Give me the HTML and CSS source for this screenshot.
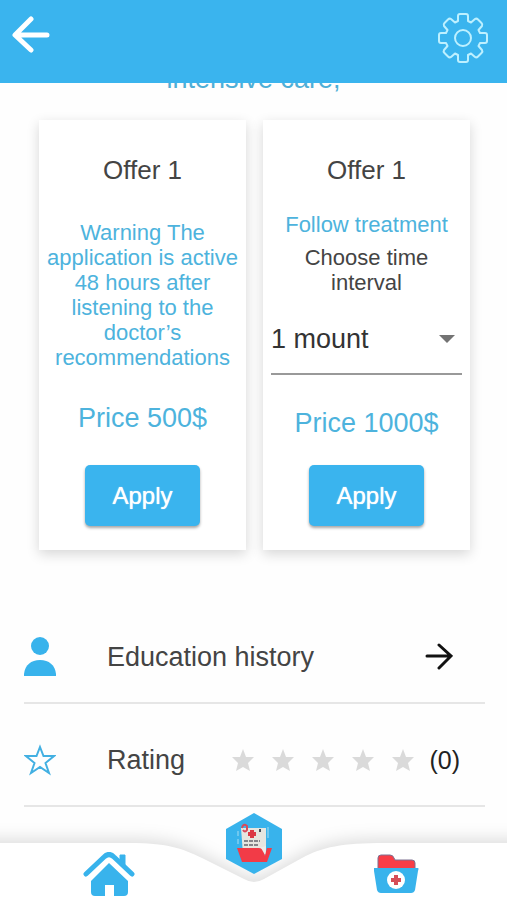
FILE: index.html
```html
<!DOCTYPE html>
<html lang="en">
<head>
<meta charset="utf-8">
<meta name="viewport" content="width=device-width, initial-scale=1">
<title>Offers</title>
<link rel="stylesheet" href="styles.css">
</head>
<body>
<header class="topbar">
  <a class="back" href="#" aria-label="Back">
    <svg width="38" height="38" viewBox="0 0 38 38" fill="none" stroke="#fff" stroke-width="5" stroke-linecap="round" stroke-linejoin="round"><path d="M19 3 3 19l16 15M4 19h31"/></svg>
  </a>
  <button class="settings" type="button" aria-label="Settings">
    <svg width="52" height="52" viewBox="-26 -26 52 52" fill="none" stroke="#bdf0ff" stroke-width="2" stroke-linejoin="round"><path d="M-5-17V-22Q-5-24-3-24H3Q5-24 5-22V-17Q7-16 8-15.500L12-19Q13.500-20 15-18.500L18.500-15Q20-13.500 19-12L15.500-8Q16-7 17-5H22Q24-5 24-3V3Q24 5 22 5H17Q16 7 15.500 8L19 12Q20 13.500 18.500 15L15 18.500Q13.500 20 12 19L8 15.500Q7 16 5 17V22Q5 24 3 24H-3Q-5 24-5 22V17Q-7 16-8 15.500L-12 19Q-13.500 20-15 18.500L-18.500 15Q-20 13.500-19 12L-15.500 8Q-16 7-17 5H-22Q-24 5-24 3V-3Q-24-5-22-5H-17Q-16-7-15.500-8L-19-12Q-20-13.500-18.500-15L-15-18.500Q-13.500-20-12-19L-8-15.500Q-7-16-5-17Z"/><circle r="8"/></svg>
  </button>
</header>

<main>
  <p class="specialty">intensive care,</p>

  <section class="offers">
    <article class="card">
      <h2>Offer 1</h2>
      <p class="warning">Warning The application is active 48 hours after listening to the doctor’s recommendations</p>
      <p class="price">Price 500$</p>
      <button class="apply" type="button">Apply</button>
    </article>
    <article class="card">
      <h2>Offer 1</h2>
      <p class="follow">Follow treatment</p>
      <label class="choose" for="interval">Choose time interval</label>
      <div class="picker">
        <select id="interval"><option>1 mount</option></select>
        <svg width="16" height="8" viewBox="0 0 16 8" aria-hidden="true"><path d="M0 0h16L8 8Z" fill="#737373"/></svg>
      </div>
      <p class="price">Price 1000$</p>
      <button class="apply" type="button">Apply</button>
    </article>
  </section>

  <section class="rows">
    <a class="row" href="#">
      <svg width="32" height="40" viewBox="0 0 32 40" fill="#38b3ec"><circle cx="16" cy="9" r="9"/><path d="M0 39V37C1 28 7 23 16 23S31 28 32 37V39Z"/></svg>
      <span class="name">Education history</span>
      <svg class="go" width="28" height="28" viewBox="0 0 28 28" fill="none" stroke="#111" stroke-width="3" stroke-linecap="round"><path d="M2 13h23M14 2l12 11-12 12"/></svg>
    </a>
    <div class="row">
      <svg width="32" height="32" viewBox="0 0 32 32" fill="none" stroke="#43b0e2" stroke-width="2"><path d="m16 3 3.500 9H30l-8.500 7 3.500 10-9-6-9 6 3.500-10L2 12h10.500Z"/></svg>
      <span class="name">Rating</span>
      <span class="stars" role="img" aria-label="0 of 5 stars">
        <svg viewBox="0 0 24 24"><path d="m12 1 3 8h8l-6 6 2 8-7-4-7 4 2-8-6-6h8Z"/></svg>
        <svg viewBox="0 0 24 24"><path d="m12 1 3 8h8l-6 6 2 8-7-4-7 4 2-8-6-6h8Z"/></svg>
        <svg viewBox="0 0 24 24"><path d="m12 1 3 8h8l-6 6 2 8-7-4-7 4 2-8-6-6h8Z"/></svg>
        <svg viewBox="0 0 24 24"><path d="m12 1 3 8h8l-6 6 2 8-7-4-7 4 2-8-6-6h8Z"/></svg>
        <svg viewBox="0 0 24 24"><path d="m12 1 3 8h8l-6 6 2 8-7-4-7 4 2-8-6-6h8Z"/></svg>
      </span>
      <span class="count">(0)</span>
    </div>
  </section>
</main>

<nav class="tabs" aria-label="Main">
  <svg class="wave" viewBox="0 0 507 100" preserveAspectRatio="none" aria-hidden="true"><path d="M-20 43H130C165 43 182 48 202 58L244 79Q254 85 264 79L302 58C322 47 342 43 385 43H527V120H-20Z" fill="#fff"/></svg>
  <a href="#" aria-label="Home">
    <svg width="52" height="46" viewBox="0 0 52 46"><path d="M37 12V3h5v14" fill="#38b3ec" stroke="#38b3ec" stroke-linejoin="round"/><path d="M3 22 21 5Q26 0 31 5L49 22" fill="none" stroke="#38b3ec" stroke-width="5" stroke-linecap="round"/><path d="M26 11 45 29V40Q45 44 41 44H31V33H22V44H12Q8 44 8 40V29Z" fill="#38b3ec"/></svg>
  </a>
  <a class="center" href="#" aria-label="Records">
    <svg width="58" height="62" viewBox="0 0 58 62"><path d="M30 0 58 16V46L30 61 2 46V16Z" fill="#38b3ec"/><path d="M17 15H42V41H19Z" fill="#e6e6e0"/><path d="M14 18v5m0 3v5M44 14v11" stroke="#a5dcf2" fill="none"/><path d="M18 15q1-5 5-2v4q-2 3-4 0" fill="none" stroke="#d84b5c" stroke-width="2"/><path d="M28 17v8m-4-4h8" stroke="#dc3945" stroke-width="4"/><path d="M36 16v3" stroke="#45505b" stroke-width="2"/><path d="M20 28h16M20 32h14" stroke="#85858a" stroke-width="2" stroke-dasharray="4 1"/><path d="M13 35H37L41 42 43 35H48L43 49H18Z" fill="#f23b47"/><path d="M35 35Q40 35 41 43L42 33Z" fill="#eeeeea"/></svg>
  </a>
  <a class="folder" href="#" aria-label="Medical folder">
    <svg width="46" height="40" viewBox="0 0 46 40"><path d="M5 17V4Q5 1 8 1H17Q20 1 21 4L22 6H39Q42 6 42 9V17Z" fill="#f83d46" stroke="#7d7191"/><path d="M1 14H45Q46 14 45 17L42 36Q41 39 38 39H8Q5 39 4 36L1 17Z" fill="#38b3ec"/><circle cx="23" cy="26" r="9" fill="#fff"/><path d="M23 21v10m-5-5h10" stroke="#d64e58" stroke-width="4"/></svg>
  </a>
</nav>
</body>
</html>
```
FILE: styles.css
```css
* {
  box-sizing: border-box;
}

body {
  margin: 0;
  padding-bottom: 92px;
  background: #fefefe;
  color: #444;
  font: 27px/32px "Liberation Sans", Arial, sans-serif;
}

h2,
p {
  margin: 0;
  font-size: 27px;
  font-weight: 400;
}

h2 {
  font-size: 26px;
}

a {
  color: inherit;
  text-decoration: none;
}

svg {
  display: block;
  flex: none;
}

button {
  border: 0;
  font-family: inherit;
  cursor: pointer;
}

.topbar {
  position: sticky;
  top: 0;
  z-index: 2;
  display: flex;
  align-items: flex-start;
  justify-content: space-between;
  height: 83px;
  padding: 12px 18px 0 12px;
  background: #3ab4ee;
}

.back {
  padding-top: 4px;
}

.settings {
  padding: 0;
  background: none;
}

/* The line is partly scrolled under the top bar. */
.specialty {
  margin-top: -20px;
  text-align: center;
  color: #4faed6;
}

.offers {
  display: grid;
  grid-template-columns: 1fr 1fr;
  gap: 17px;
  padding: 25px 37px 0 39px;
}

.card {
  display: flex;
  flex-direction: column;
  align-items: center;
  min-height: 430px;
  padding: 34px 8px 24px;
  background: #fff;
  box-shadow: 0 4px 12px rgba(0, 0, 0, 0.16);
  text-align: center;
}

.warning,
.follow,
.choose {
  font-size: 22px;
  line-height: 25px;
}

.warning,
.follow,
.price {
  color: #4db3dd;
}

.warning {
  margin: 34px -4px 0;
}

.follow {
  margin-top: 26px;
}

.choose {
  margin-top: 8px;
  padding: 0 24px;
}

.price {
  margin-top: 32px;
}

.picker {
  display: flex;
  align-items: center;
  align-self: stretch;
  margin-top: 10px;
  border-bottom: 2px solid #999;
}

.picker select {
  flex: 1;
  height: 68px;
  margin-right: -24px;
  padding: 0 24px 0 0;
  border: 0;
  appearance: none;
  background: none;
  color: #333;
  font: inherit;
}

.picker svg {
  margin-right: 7px;
  pointer-events: none;
}

.apply {
  width: 115px;
  height: 61px;
  margin-top: auto;
  border-radius: 5px;
  background: #3ab4ee;
  box-shadow: 0 2px 3px rgba(0, 0, 0, 0.35);
  color: #fff;
  font-size: 24px;
  text-shadow: 0 0 1px #fff;
}

.rows {
  margin: 51px 22px 0 24px;
}

.row {
  display: flex;
  align-items: center;
  height: 103px;
  padding: 11px 0 0;
  border-bottom: 2px solid #e6e6e6;
}

.name {
  margin-left: 51px;
}

.go {
  margin: 0 32px 0 auto;
}

.stars {
  display: flex;
  gap: 16px;
  margin-left: auto;
}

.stars svg {
  width: 24px;
  height: 24px;
  fill: #dadada;
}

.count {
  margin: 0 25px 0 14px;
  color: #222;
  font-size: 25px;
}

.tabs {
  position: fixed;
  right: 0;
  bottom: 0;
  left: 0;
  display: grid;
  grid-template-columns: 1fr 1fr 1fr;
  align-items: end;
  justify-items: center;
  height: 100px;
  padding: 0 37px 2px;
}

.wave {
  position: absolute;
  inset: 0;
  width: 100%;
  height: 100%;
  overflow: visible;
  filter: drop-shadow(0 -4px 8px rgba(0, 0, 0, 0.13));
}

.tabs a {
  position: relative;
}

.tabs .center {
  align-self: start;
  padding-top: 13px;
}

.tabs .folder {
  padding: 0 4px 4px 0;
}
```
